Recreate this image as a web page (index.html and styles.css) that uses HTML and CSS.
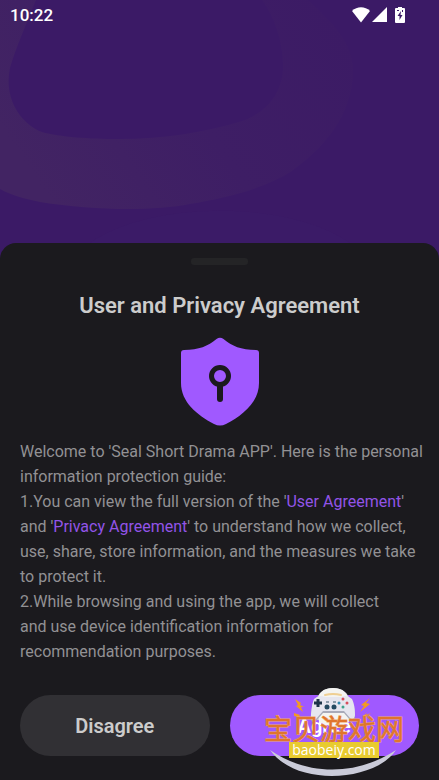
FILE: index.html
```
<!DOCTYPE html>
<html lang="en">
<head>
    <meta charset="UTF-8">
    <meta name="viewport" content="width=device-width, initial-scale=1.0">
    <title>User and Privacy Agreement</title>
    <link rel="stylesheet" href="styles.css">
</head>
<body>
    <div class="screen">
        <svg class="backdrop" width="439" height="260" viewBox="0 0 439 260" aria-hidden="true">
            <defs>
                <linearGradient id="ringFade" x1="0" y1="0.6" x2="1" y2="0.2">
                    <stop offset="0" stop-color="#422463"/>
                    <stop offset="0.5" stop-color="#3e1e65"/>
                    <stop offset="1" stop-color="#3c1b65"/>
                </linearGradient>
            </defs>
            <path fill="url(#ringFade)" fill-rule="evenodd" d="M0 0H308C335 24 352 44 353 68C354 105 335 140 292 171C265 189 225 198 190 204C155 211 95 211 40 202C25 199 11 195 0 189ZM36 0C26 25 15 50 10 68C4 96 18 122 42 132C60 137 90 139 118 139C165 139 205 132 242 121C268 112 282 92 283 68C283 42 275 18 262 0Z"/>
            <path fill="#3b1b67" d="M90 243C150 200 290 200 350 243Z"/>
        </svg>

        <header class="status-bar">
            <span class="clock">10:22</span>
            <div class="status-icons">
                <svg width="18" height="16" viewBox="0 0 18 16"><path fill="#fff" d="M0 4C5-1 13-1 18 4L9 15.500Z"/></svg>
                <svg width="16" height="16" viewBox="0 0 16 16"><path fill="#fff" d="M15 0V15H0Z"/></svg>
                <svg class="battery" width="10" height="16" viewBox="0 0 10 16">
                    <path fill="#fff" d="M3 0H7V1H9Q10 1 10 2V15Q10 16 9 16H1Q0 16 0 15V2Q0 1 1 1H3Z"/>
                    <path fill="#3b1a66" d="M6 4L2.500 9H4.500V13L7.500 8H5.500ZM2 3H4V4H2ZM7 3H8V5H7Z"/>
                </svg>
            </div>
        </header>

        <main class="sheet">
            <div class="handle"></div>
            <h1>User and Privacy Agreement</h1>
            <svg class="shield" width="80" height="90" viewBox="0 0 80 90" aria-hidden="true">
                <path fill="#a059ff" d="M36.500 2Q40-.5 43.500 2C52 9 61 13 76 13Q79 13 79 16V46C79 65 63 78 46 87Q40 90 34 87C17 78 1 65 1 46V16Q1 13 4 13C19 13 28 9 36.500 2Z"/>
                <circle cx="40" cy="39" r="8.500" fill="none" stroke="#1b1a1e" stroke-width="5"/>
                <path d="M40 49V62" stroke="#1b1a1e" stroke-width="6" stroke-linecap="round"/>
            </svg>

            <div class="agreement">
                <p>Welcome to 'Seal Short Drama APP'. Here is the personal information protection guide:</p>
                <p>1.You can view the full version of the '<a href="#user-agreement">User Agreement</a>' and '<a href="#privacy-agreement">Privacy Agreement</a>' to understand how we collect, use, share, store information, and the measures we take to protect it.</p>
                <p>2.While browsing and using the app, we will collect<br>and use device identification information for recommendation purposes.</p>
            </div>

            <div class="actions">
                <button type="button" class="btn btn-disagree">Disagree</button>
                <button type="button" class="btn btn-agree">Agree</button>
            </div>
        </main>

        <div class="site-mark">
            <svg class="mark-art" width="144" height="90" viewBox="0 0 144 90" aria-hidden="true">
                <!-- seal head -->
                <path fill="#c9cad8" d="M53 34Q50 2 71 2Q92 2 90 34Z"/>
                <path fill="#f4f4f1" d="M55 17Q56 2 71 2Q86 2 87 17V36Q71 44 57 36Z"/>
                <path fill="none" stroke="#efcf93" stroke-width="2" stroke-linecap="round" d="M63 9Q71 7 79 9"/>
                <!-- game controller -->
                <g transform="translate(1 0)">
                    <path fill="#a9abb9" d="M51 14Q56 9 62 12H78Q84 9 89 14Q92 20 92 31Q91 37 87 34L81 27H60L53 35Q47 38 48 30Q49 18 51 14Z"/>
                    <path fill="#e6e6ef" d="M51 13Q56 8 62 11H78Q84 8 89 13Q92 19 92 29Q91 35 87 32L81 25H60L53 33Q47 36 48 28Q49 17 51 13Z"/>
                    <path stroke="#1d3449" stroke-width="3" d="M51 17H59M55 13V21"/>
                    <circle cx="64" cy="21" r="2.500" fill="#254a61"/>
                    <circle cx="71" cy="21" r="2.500" fill="#254a61"/>
                    <path stroke="#345366" stroke-width="1" d="M63 16H66M70 16H73"/>
                    <circle cx="80" cy="13" r="1.500" fill="#d84d5b"/>
                    <circle cx="76" cy="17" r="1.500" fill="#3388ac"/>
                    <circle cx="84" cy="17" r="1.500" fill="#d84d5b"/>
                    <circle cx="80" cy="21" r="1.500" fill="#3fa18b"/>
                </g>
                <!-- sparks -->
                <path fill="#f39a22" d="M33 13L39 17L38 19L42 21L39 21L41 26L34 20L36 19ZM32 27L38 29L37 30L40 32L32 30ZM108 12L104 17L108 18L98 26L102 20L99 19ZM101 30L105 27L104 29L109 27L104 31Z"/>
                <path fill="#cacbd9" d="M8 64C45 90 95 90 134 64C114 95 35 102 8 64Z"/>
            </svg>
            <span class="mark-name" lang="zh">宝贝游戏网</span>
            <span class="mark-url">baobeiy.com</span>
        </div>
    </div>
</body>
</html>
```
FILE: styles.css
```
* {
    margin: 0;
    padding: 0;
    box-sizing: border-box;
}

body {
    font-family: Roboto, "Noto Sans", sans-serif;
    background: #3b1a66;
    color: #cccccc;
}

.screen {
    position: relative;
    display: flex;
    flex-direction: column;
    min-height: 100vh;
    overflow: hidden;
}

.backdrop {
    position: absolute;
    top: 0;
    left: 0;
}

.status-bar {
    position: relative;
    display: flex;
    justify-content: space-between;
    align-items: center;
    height: 30px;
    padding: 0 34px 0 10px;
    color: #fff;
}

.clock {
    font-size: 17px;
    font-weight: 500;
}

.status-icons {
    display: flex;
    align-items: center;
    gap: 2px;
}

.battery {
    margin-left: 5px;
}

.sheet {
    position: relative;
    margin-top: auto;
    padding: 15px 0 24px;
    background: #1b1a1e;
    border-radius: 16px 16px 0 0;
    display: flex;
    flex-direction: column;
    align-items: center;
}

.handle {
    width: 57px;
    height: 7px;
    border-radius: 3px;
    background: #242426;
}

h1 {
    margin-top: 27px;
    font-size: 22px;
    font-weight: 600;
    line-height: 28px;
    text-align: center;
}

.shield {
    margin-top: 17px;
}

.agreement {
    width: 100%;
    margin-top: 12px;
    padding: 0 14px 0 20px;
    font-size: 16px;
    line-height: 25px;
    color: #929194;
}

.agreement a {
    color: #9254e8;
    text-decoration: none;
}

.actions {
    display: flex;
    gap: 20px;
    width: 100%;
    margin-top: 31px;
    padding: 0 20px;
}

.btn {
    flex: 1;
    height: 61px;
    border: none;
    border-radius: 31px;
    font-family: inherit;
    font-size: 20px;
    font-weight: 600;
    cursor: pointer;
}

.btn-disagree {
    background: #313034;
    color: #cccccc;
}

.btn-agree {
    background: #a059ff;
    color: #fff;
}

.site-mark {
    position: absolute;
    right: 33px;
    bottom: 4px;
    display: flex;
    flex-direction: column;
    align-items: center;
    width: 144px;
    height: 90px;
    padding-top: 28px;
    pointer-events: none;
}

.mark-art {
    position: absolute;
    top: 0;
    left: 0;
}

.mark-name {
    position: relative;
    font-family: "Noto Sans CJK SC", sans-serif;
    font-size: 28px;
    line-height: 28px;
    white-space: nowrap;
    color: #e0752c;
    -webkit-text-stroke: 1px #f0a868;
    paint-order: stroke fill;
}

.mark-url {
    position: relative;
    padding: 0 3px;
    background: #e8cb2f;
    color: #fff;
    font-family: "Open Sans", sans-serif;
    font-size: 14px;
    font-weight: 400;
    line-height: 16px;
}
```
